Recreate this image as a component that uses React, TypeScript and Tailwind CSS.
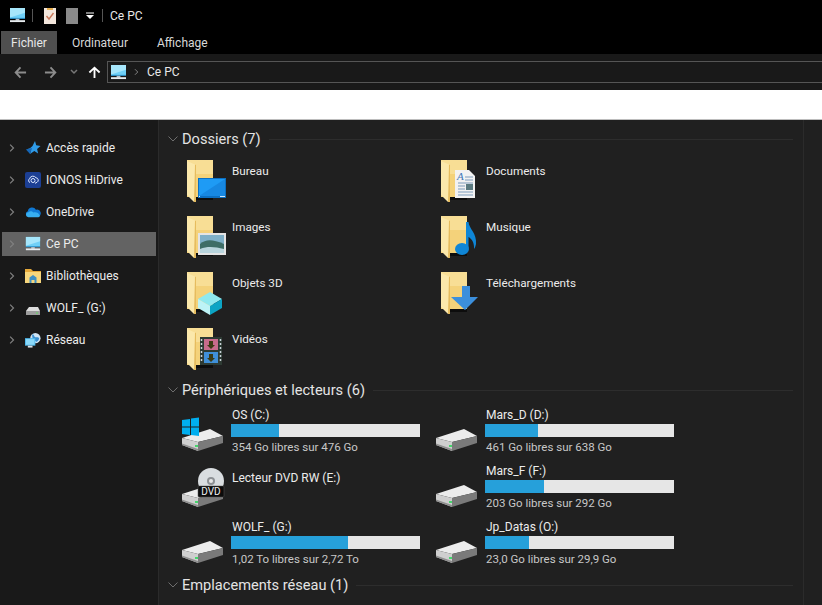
import { ReactNode } from "react";

function Monitor({ className }: { className?: string }) {
  return (
    <svg viewBox="0 0 18 16" className={className}>
      <rect x="1" y="0" width="16" height="11" fill="#6fd0f7" />
      <path d="M1 0h16v5L1 10z" fill="#a6e6fb" />
      <rect x="1" y="10.5" width="16" height="1" fill="#2a9ad8" />
      <rect x="7" y="11.5" width="4" height="2" fill="#b8c4cc" />
      <rect x="1" y="13" width="16" height="2" fill="#e8edf0" />
    </svg>
  );
}

function Chevron({ className }: { className?: string }) {
  return (
    <svg viewBox="0 0 8 12" className={className} fill="none" stroke="#808080" strokeWidth="1.6">
      <path d="M1.5 1.500 6 6l-4.500 4.500" />
    </svg>
  );
}

function Arrow({ color, up }: { color: string; up?: boolean }) {
  return (
    <svg viewBox="0 0 14 14" className={`w-[13px] h-[13px] ${up ? "rotate-90" : ""}`} fill="none" stroke={color} strokeWidth="2">
      <path d="M13 7H2M7 1.500 1.800 7 7 12.500" />
    </svg>
  );
}

function Star() {
  return (
    <svg viewBox="0 0 16 16" className="w-4 h-4">
      <path d="M10 1l1.200 4.200L15.500 6l-3.400 2.900 1 4.600-3.800-2.500L5 14l1.200-4.200L1 9.500l4-1.200L7.500 6z" fill="#2f9be8" />
      <path d="M1 9.500 7 8l-2 6z" fill="#1567b8" />
    </svg>
  );
}

function HiDrive() {
  return (
    <svg viewBox="0 0 16 16" className="w-4 h-4">
      <rect x="0" y="0" width="16" height="16" rx="2" fill="#1c3f94" />
      <circle cx="8" cy="8.500" r="2" fill="none" stroke="#dfe8ff" strokeWidth="1" />
      <path d="M5 10.500a2 2 0 0 1-.5-3.600A3.600 3.600 0 0 1 11 5.800a2.400 2.400 0 0 1 1 4.500l-2 1" fill="none" stroke="#dfe8ff" strokeWidth="1" />
    </svg>
  );
}

function Cloud() {
  return (
    <svg viewBox="0 0 17 12" className="w-[17px] h-3">
      <path d="M3.500 11A3 3 0 0 1 3 5.200 4.600 4.600 0 0 1 11.600 3.600 3.800 3.800 0 0 1 14 11z" fill="#0f78d4" />
      <path d="M3.500 11.500a2.600 2.600 0 0 1 .3-5.200c1.500-1.800 4-.8 5 .3 2.500-1 6 .3 7 3.200 0 1-.6 1.700-1.600 1.700z" fill="#37aef0" />
    </svg>
  );
}

function Library() {
  return (
    <svg viewBox="0 0 16 16" className="w-4 h-4">
      <path d="M0 1h6l2 2h8v12H0z" fill="#e6a93a" />
      <rect x="0" y="4" width="16" height="11" fill="#f7d67c" />
      <path d="M4.500 15V9.500L8 7l3.500 2.500V15h-2v-3h-3v3z" fill="#3e8fc4" />
    </svg>
  );
}

function SmallDrive() {
  return (
    <svg viewBox="0 0 16 16" className="w-4 h-4">
      <path d="M1 11 4 7h9l2 4z" fill="#dcdcdc" />
      <rect x="1" y="11" width="14" height="4" fill="#9d9d9d" />
      <rect x="11" y="12.500" width="2" height="1" fill="#5ee05e" />
    </svg>
  );
}

function Network() {
  return (
    <svg viewBox="0 0 17 17" className="w-[17px] h-[17px]">
      <circle cx="11" cy="6" r="5.500" fill="#cfe4f4" />
      <path d="M8 1.500c2 1 1.500 3 3 3.500s3-.5 4 1c0 2-2 3.500-3 4-1-1.500-3-1-3.500-3S7 4 8 1.500z" fill="#3a8fd0" />
      <rect x="0" y="6" width="11" height="8" fill="#4fb8ec" />
      <rect x="1" y="7" width="9" height="6" fill="#8ad8f8" />
      <rect x="3" y="14" width="5" height="2" fill="#d8e0e6" />
    </svg>
  );
}

function Folder({ children }: { children?: ReactNode }) {
  return (
    <svg viewBox="0 0 48 48" className="w-12 h-12 shrink-0 mt-2">
      <rect x="4" y="2" width="26" height="37" fill="#f4d27a" />
      <rect x="4" y="2" width="26" height="14" fill="#f8de95" />
      <rect x="12" y="39" width="18" height="3" fill="#0d0d0d" />
      <path d="M4 3 13 7v37h-2l-7-7z" fill="#fbe8ab" />
      <path d="M12 6.500 13 7v37h-2z" fill="#e6bc5e" />
      {children}
    </svg>
  );
}

function Drive() {
  return (
    <>
      <path d="M2 33 30 24l13 7-25 6z" fill="#ececec" />
      <path d="M2 33 18 37v9L2 40z" fill="#cfcfcf" />
      <path d="M43 31v7l-25 8v-9z" fill="#7a7a7a" />
      <path d="M2 38.500 18 44v2L2 40z" fill="#8f8f8f" />
      <rect x="15" y="40" width="3" height="2" fill="#46d66c" />
    </>
  );
}

function DriveIcon({ kind }: { kind?: "os" | "dvd" }) {
  return (
    <svg viewBox="0 0 48 48" className="w-12 h-12 shrink-0">
      <Drive />
      {kind === "os" && (
        <path d="M2 15 10 14v7.500H2zM11 13.500 19 12.500v9h-8zM2 22.500h8V30l-8-1zM11 22.500h8V31l-8-1z" fill="#00aeef" />
      )}
      {kind === "dvd" && (
        <>
          <circle cx="31" cy="20" r="13" fill="#d9dde0" />
          <circle cx="31" cy="20" r="4" fill="#8d9195" />
          <circle cx="31" cy="20" r="2" fill="#e9e9e9" />
          <rect x="18" y="25" width="26" height="11" rx="1" fill="#0b0b0b" stroke="#555" strokeWidth=".5" />
          <text x="31" y="34" textAnchor="middle" fontSize="10" fill="#f0f0f0" fontFamily="Roboto, sans-serif">DVD</text>
        </>
      )}
    </svg>
  );
}

function SectionHeader({ title }: { title: string }) {
  return (
    <div className="h-5 flex items-center">
      <svg viewBox="0 0 10 6" className="w-[10px] h-[6px] mr-[4px] shrink-0" fill="none" stroke="#6e6e6e">
        <path d="M.5.5 5 5 9.500.5" />
      </svg>
      <span className="text-[14.6px] leading-5 text-[#e4e4e4] whitespace-nowrap">{title}</span>
      <div className="flex-1 h-px bg-[#2d2d2d] ml-[8px]" />
    </div>
  );
}

const navItems: { label: string; icon: ReactNode; active?: boolean }[] = [
  { label: "Accès rapide", icon: <Star /> },
  { label: "IONOS HiDrive", icon: <HiDrive /> },
  { label: "OneDrive", icon: <Cloud /> },
  { label: "Ce PC", icon: <Monitor className="w-4 h-4" />, active: true },
  { label: "Bibliothèques", icon: <Library /> },
  { label: "WOLF_ (G:)", icon: <SmallDrive /> },
  { label: "Réseau", icon: <Network /> },
];

const folders: { name: string; overlay: ReactNode }[] = [
  {
    name: "Bureau",
    overlay: (
      <>
        <rect x="15" y="20" width="28" height="20" fill="#0b6fc2" />
        <rect x="16" y="21" width="26" height="17" fill="#1e9bf5" />
        <path d="M16 38 42 21v17z" fill="#1788e2" />
        <rect x="37" y="38" width="5" height="1" fill="#cfe8fa" />
        <rect x="16" y="38" width="1" height="1" fill="#cfe8fa" />
      </>
    ),
  },
  {
    name: "Documents",
    overlay: (
      <>
        <path d="M18 12h14l6 6v22H18z" fill="#f2f2f2" />
        <text x="20" y="22" fontSize="11" fontStyle="italic" fill="#3f77b8" fontFamily="Liberation Serif, serif">A</text>
        <path d="M28 19h8M28 22h8M21 25h15M21 28h7M21 31h7M21 34h15M21 37h15" stroke="#7c9cbc" strokeWidth="1" />
        <rect x="29" y="26" width="7" height="6" fill="#5a7a80" />
      </>
    ),
  },
  {
    name: "Images",
    overlay: (
      <>
        <rect x="15" y="19" width="28" height="22" fill="#e4e4e4" />
        <rect x="17" y="21" width="24" height="18" fill="#7fb0c8" />
        <path d="M17 30c6-5 12-5 24 0v9H17z" fill="#3e6d66" />
        <path d="M17 35c8-3 15-2 24 0v4H17z" fill="#b8d4dc" />
      </>
    ),
  },
  {
    name: "Musique",
    overlay: (
      <>
        <path d="M29 8h2.500c.5 7 8.500 11 7.500 22-.5 2-1 4-2 5 .5-6-2-10-5.500-12V34h-2.500z" fill="#0f86d6" />
        <ellipse cx="25" cy="35" rx="7" ry="6" fill="#0f86d6" />
      </>
    ),
  },
  {
    name: "Objets 3D",
    overlay: (
      <>
        <path d="M27 22 39 29 27 36 15 29z" fill="#8fe9ef" />
        <path d="M15 29v9l12 7V36z" fill="#bdf3f6" />
        <path d="M39 29v9l-12 7V36z" fill="#0ca4c4" />
      </>
    ),
  },
  {
    name: "Téléchargements",
    overlay: <path d="M25 16h8v11h8L28 40 14 27h11z" fill="#3b8fdc" />,
  },
  {
    name: "Vidéos",
    overlay: (
      <>
        <rect x="17" y="11" width="22" height="28" fill="#2d3a33" />
        <rect x="21" y="13" width="14" height="11" fill="#c86b8c" />
        <rect x="21" y="26" width="14" height="11" fill="#3f8fd8" />
        <path d="M26 15h4v4h2l-4 4-4-4h2zM26 28h4v4h2l-4 4-4-4h2z" fill="#3b3a14" />
        <path d="M18.500 13v24M37.500 13v24" stroke="#c9d2d8" strokeWidth="1.500" strokeDasharray="2 2" />
      </>
    ),
  },
];

const drives: { name: string; free?: string; pct?: number; kind?: "os" | "dvd" }[] = [
  { name: "OS (C:)", free: "354 Go libres sur 476 Go", pct: 25.5, kind: "os" },
  { name: "Mars_D (D:)", free: "461 Go libres sur 638 Go", pct: 28 },
  { name: "Lecteur DVD RW (E:)", kind: "dvd" },
  { name: "Mars_F (F:)", free: "203 Go libres sur 292 Go", pct: 31 },
  { name: "WOLF_ (G:)", free: "1,02 To libres sur 2,72 To", pct: 62 },
  { name: "Jp_Datas (O:)", free: "23,0 Go libres sur 29,9 Go", pct: 23.5 },
];

export default function App() {
  return (
    <div className="w-full h-screen overflow-hidden flex flex-col bg-[#202020] text-[12px] text-[#f0f0f0] font-['Roboto',sans-serif]">
      {/* title bar */}
      <div className="h-[31px] shrink-0 bg-black flex items-center pl-[9px]">
        <Monitor className="w-[17px] h-[15px]" />
        <div className="w-px h-[13px] bg-[#555] ml-[6px]" />
        <svg viewBox="0 0 12 16" className="w-3 h-4 ml-[11px]">
          <rect width="12" height="16" fill="#f2e6dc" />
          <rect x="3" y="0" width="6" height="2" fill="#e8b050" />
          <path d="M2.500 8 5 11l4.500-6" fill="none" stroke="#c9785a" strokeWidth="1.400" />
        </svg>
        <div className="w-3 h-4 ml-[10px] bg-[#8a8a8a]" />
        <svg viewBox="0 0 8 8" className="w-2 h-2 ml-[8px]">
          <path d="M0 1h8" stroke="#fff" />
          <path d="M0 3h8L4 7z" fill="#fff" />
        </svg>
        <div className="w-px h-[13px] bg-[#555] ml-[8px]" />
        <span className="ml-[7px] text-[#e8e8e8]">Ce PC</span>
      </div>

      {/* ribbon tabs */}
      <div className="h-[23px] shrink-0 bg-black flex pl-px">
        <div className="w-14 bg-[#4f4f4f] flex items-center justify-center text-[#e8e8e8]">Fichier</div>
        <div className="ml-[15px] flex items-center text-[#d8d8d8]">Ordinateur</div>
        <div className="ml-[29px] flex items-center text-[#d8d8d8]">Affichage</div>
      </div>

      {/* address bar */}
      <div className="h-9 shrink-0 bg-[#191919] flex items-center pl-[14px]">
        <Arrow color="#8c8c8c" />
        <div className="ml-[17px] rotate-180 flex"><Arrow color="#8c8c8c" /></div>
        <svg viewBox="0 0 8 6" className="w-2 h-[6px] ml-[13px]" fill="none" stroke="#777" strokeWidth="1.500">
          <path d="M1 1l3 3 3-3" />
        </svg>
        <div className="ml-[10px] flex"><Arrow color="#ffffff" up /></div>
        <div className="ml-[6px] flex-1 h-[22px] border border-[#555] border-r-0 flex items-center pl-[2px]">
          <Monitor className="w-[17px] h-[15px]" />
          <Chevron className="w-[5px] h-2 ml-[7px]" />
          <span className="ml-[8px] text-[#e8e8e8]">Ce PC</span>
        </div>
      </div>

      {/* white strip under the address bar */}
      <div className="h-[30px] shrink-0 bg-white border-b border-[#bdbdbd]" />

      <div className="flex-1 flex min-h-0">
        {/* navigation pane */}
        <nav className="w-[159px] shrink-0 bg-[#191919] border-r border-[#2b2b2b] pt-4 flex flex-col gap-2">
          {navItems.map((item) => (
            <div
              key={item.label}
              className={`h-6 ml-[2px] w-[154px] flex items-center pl-[7px] ${item.active ? "bg-[#636363]" : ""}`}
            >
              <Chevron className="w-[6px] h-[10px] shrink-0" />
              <div className="w-4 ml-[10px] flex justify-center">{item.icon}</div>
              <span className="ml-[5px] text-[#ececec] whitespace-nowrap">{item.label}</span>
            </div>
          ))}
        </nav>

        {/* content */}
        <main className="flex-1 min-w-0 pl-[9px] pt-[9px]">
          <div className="w-[625px]">
            <SectionHeader title="Dossiers (7)" />
            <div className="mt-px grid grid-cols-[254px_254px] pl-[15px]">
              {folders.map((f) => (
                <div key={f.name} className="h-14 flex">
                  <Folder>{f.overlay}</Folder>
                  <span className="ml-px pt-[12px] text-[11.7px] leading-[18px] text-[#ececec]">{f.name}</span>
                </div>
              ))}
            </div>
            <div className="mt-[6px]">
              <SectionHeader title="Périphériques et lecteurs (6)" />
            </div>
            <div className="mt-[5px] grid grid-cols-[254px_254px] pl-[12px]">
              {drives.map((d) => (
                <div key={d.name} className="h-14 flex">
                  <DriveIcon kind={d.kind} />
                  <div className={`ml-[3px] w-[189px] ${d.pct === undefined ? "pt-2" : "pt-[1px]"}`}>
                    <div className="pl-px leading-[18px] text-[#ececec] whitespace-nowrap">{d.name}</div>
                    {d.pct !== undefined && (
                      <>
                        <div className="h-[13px] bg-[#e6e6e6]">
                          <div className="h-full bg-[#26a0da]" style={{ width: `${d.pct}%` }} />
                        </div>
                        <div className="pl-px mt-[1px] text-[11.5px] leading-[18px] text-[#c8c8c8] whitespace-nowrap">{d.free}</div>
                      </>
                    )}
                  </div>
                </div>
              ))}
            </div>
            <div className="mt-[2px]">
              <SectionHeader title="Emplacements réseau (1)" />
            </div>
          </div>
        </main>
        <div className="w-[19px] shrink-0 border-l border-[#2b2b2b]" />
      </div>
    </div>
  );
}
